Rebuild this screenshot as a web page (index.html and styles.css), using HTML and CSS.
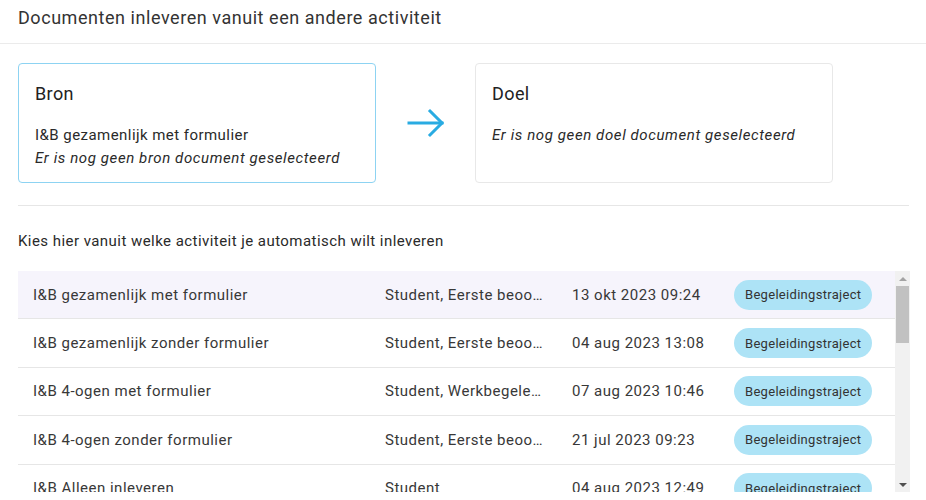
FILE: index.html
```html
<!DOCTYPE html>
<html lang="nl">
<head>
<meta charset="utf-8">
<link rel="stylesheet" href="styles.css">
</head>
<body>
<header class="header"><h1 class="title">Documenten inleveren vanuit een andere activiteit</h1></header>
<main class="content">
  <section class="cards">
    <div class="card card-active">
      <h2 class="card-title">Bron</h2>
      <p class="card-line">I&amp;B gezamenlijk met formulier</p>
      <p class="card-line italic">Er is nog geen bron document geselecteerd</p>
    </div>
    <div class="arrow">
      <svg width="40" height="32" viewBox="0 0 40 32"><g fill="none" stroke="#29abe2" stroke-width="3" stroke-linecap="square"><line x1="3" y1="16" x2="36" y2="16"/><polyline points="24,4 36,16 24,28"/></g></svg>
    </div>
    <div class="card">
      <h2 class="card-title">Doel</h2>
      <p class="card-line italic">Er is nog geen doel document geselecteerd</p>
    </div>
  </section>
  <hr class="divider">
  <p class="intro">Kies hier vanuit welke activiteit je automatisch wilt inleveren</p>
  <div class="table-area">
    <div class="table-list">
      <div class="row selected"><div class="cell">I&amp;B gezamenlijk met formulier</div><div class="cell ellip">Student, Eerste beoordelaar</div><div class="cell">13 okt 2023 09:24</div><div class="cell"><span class="chip">Begeleidingstraject</span></div></div>
      <div class="row"><div class="cell">I&amp;B gezamenlijk zonder formulier</div><div class="cell ellip">Student, Eerste beoordelaar</div><div class="cell">04 aug 2023 13:08</div><div class="cell"><span class="chip">Begeleidingstraject</span></div></div>
      <div class="row"><div class="cell">I&amp;B 4-ogen met formulier</div><div class="cell ellip">Student, Werkbegeleider</div><div class="cell">07 aug 2023 10:46</div><div class="cell"><span class="chip">Begeleidingstraject</span></div></div>
      <div class="row"><div class="cell">I&amp;B 4-ogen zonder formulier</div><div class="cell ellip">Student, Eerste beoordelaar</div><div class="cell">21 jul 2023 09:23</div><div class="cell"><span class="chip">Begeleidingstraject</span></div></div>
      <div class="row"><div class="cell">I&amp;B Alleen inleveren</div><div class="cell ellip">Student</div><div class="cell">04 aug 2023 12:49</div><div class="cell"><span class="chip">Begeleidingstraject</span></div></div>
    </div>
    <div class="scrollbar">
      <div class="sb-btn"><span class="tri-up"></span></div>
      <div class="sb-track"><div class="sb-thumb"></div></div>
      <div class="sb-btn"><span class="tri-down"></span></div>
    </div>
  </div>
</main>
</body>
</html>
```
FILE: styles.css
```css
* { box-sizing: border-box; }
html, body { margin: 0; padding: 0; background: #fff; }
body {
  font-family: Roboto, "Liberation Sans", sans-serif;
  color: #222;
  width: 926px;
  height: 500px;
  overflow: hidden;
}
.header {
  height: 44px;
  border-bottom: 1px solid #ebebeb;
  padding: 6px 18px 0;
}
.title {
  margin: 0;
  font-size: 18px;
  font-weight: 400;
  line-height: 24px;
  color: #333;
  letter-spacing: 0.55px;
}
.content { padding: 19px 16px 0 18px; }
.cards { display: flex; align-items: stretch; }
.card {
  width: 358px;
  height: 120px;
  border: 1px solid #e8e8e8;
  border-radius: 4px;
  padding: 18px 16px 0 16px;
}
.card-active { border-color: #8dd3f2; }
.card-title {
  margin: 0 0 18px;
  font-size: 18px;
  font-weight: 400;
  line-height: 24px;
  letter-spacing: 0.4px;
  color: #222;
}
.card-line {
  margin: 0;
  font-size: 15px;
  line-height: 23px;
  letter-spacing: 0.45px;
  color: #2a2a2a;
}
.italic { font-style: italic; letter-spacing: 0.6px; }
.arrow {
  width: 99px;
  display: flex;
  align-items: center;
  justify-content: center;
}
.divider {
  border: 0;
  border-top: 1px solid #e6e6e6;
  margin: 22px 0 0;
  width: 891px;
}
.intro {
  margin: 0;
  padding-top: 25px;
  font-size: 15px;
  line-height: 20px;
  letter-spacing: 0.45px;
  color: #2a2a2a;
  height: 65px;
}
.table-area {
  display: flex;
  width: 892px;
  height: 221px;
  overflow: hidden;
}
.table-list {
  flex: 1;
  overflow: hidden;
}
.scrollbar {
  width: 15px;
  flex: none;
  display: flex;
  flex-direction: column;
  background: #f1f1f1;
}
.sb-btn {
  height: 15px;
  display: flex;
  align-items: center;
  justify-content: center;
}
.tri-up {
  width: 0; height: 0;
  border-left: 4px solid transparent;
  border-right: 4px solid transparent;
  border-bottom: 4px solid #a3a3a3;
}
.tri-down {
  width: 0; height: 0;
  border-left: 4px solid transparent;
  border-right: 4px solid transparent;
  border-top: 4px solid #505050;
}
.sb-track {
  flex: 1;
  padding: 0 1px;
}
.sb-thumb {
  height: 57px;
  background: #c1c1c1;
}
.row {
  display: grid;
  grid-template-columns: 352px 187px 162px 1fr;
  align-items: center;
  height: 48.4px;
  border-bottom: 1px solid #e6e6e6;
  font-size: 15px;
  letter-spacing: 0.5px;
  color: #383838;
}
.row.selected { background: #f6f4fc; }
.cell {
  padding: 0 15px;
  white-space: nowrap;
  overflow: hidden;
}
.ellip { text-overflow: ellipsis; padding-right: 14px; }
.chip {
  display: inline-flex;
  align-items: center;
  height: 30px;
  padding: 0 11px;
  border-radius: 15px;
  background: #ade3f6;
  font-size: 13px;
  letter-spacing: 0.3px;
  color: #333;
}
```
